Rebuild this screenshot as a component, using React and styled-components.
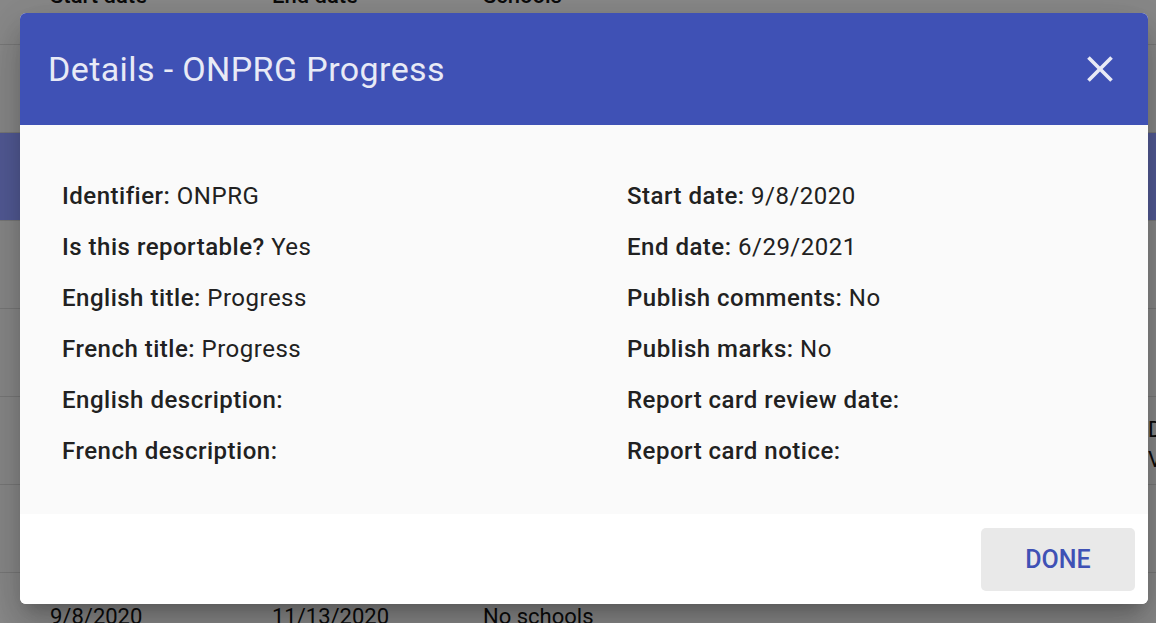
import React from "react";
import styled, { createGlobalStyle } from "styled-components";

const GlobalStyle = createGlobalStyle`
  html, body {
    margin: 0;
    padding: 0;
    height: 100%;
    overflow: hidden;
  }
  body {
    font-family: Roboto, "Liberation Sans", Arial, sans-serif;
    background: #e3e3e3;
  }
`;

const rows = [
  { start: "", end: "", schools: "" },
  { start: "", end: "", schools: "", selected: true },
  { start: "", end: "", schools: "" },
  { start: "", end: "", schools: "" },
  { start: "", end: "", schools: "", extra: ["Details", "View"] },
  { start: "", end: "", schools: "" },
  { start: "9/8/2020", end: "11/13/2020", schools: "No schools" },
];

const leftFields = [
  { label: "Identifier:", value: "ONPRG" },
  { label: "Is this reportable?", value: "Yes" },
  { label: "English title:", value: "Progress" },
  { label: "French title:", value: "Progress" },
  { label: "English description:", value: "" },
  { label: "French description:", value: "" },
];

const rightFields = [
  { label: "Start date:", value: "9/8/2020" },
  { label: "End date:", value: "6/29/2021" },
  { label: "Publish comments:", value: "No" },
  { label: "Publish marks:", value: "No" },
  { label: "Report card review date:", value: "" },
  { label: "Report card notice:", value: "" },
];

const CloseIcon = () => (
  <svg width="44" height="44" viewBox="0 0 24 24" fill="currentColor">
    <path d="M19 6.41L17.59 5 12 10.59 6.41 5 5 6.41 10.59 12 5 17.59 6.41 19 12 13.41 17.59 19 19 17.59 13.41 12z" />
  </svg>
);

const App = () => {
  return (
    <>
      <GlobalStyle />
      <Page>
        <HeaderRow>
          <Cell>Start date</Cell>
          <Cell>End date</Cell>
          <Cell>Schools</Cell>
        </HeaderRow>
        {rows.map((r, i) => (
          <Row key={i} $selected={r.selected}>
            <Cell>{r.start}</Cell>
            <Cell>{r.end}</Cell>
            <Cell>{r.schools}</Cell>
            {r.extra && (
              <ExtraCell>
                {r.extra.map((t) => (
                  <div key={t}>{t}</div>
                ))}
              </ExtraCell>
            )}
          </Row>
        ))}
      </Page>

      <Overlay>
        <Dialog>
          <DialogHeader>
            <DialogTitle>Details - ONPRG Progress</DialogTitle>
            <CloseButton aria-label="close">
              <CloseIcon />
            </CloseButton>
          </DialogHeader>
          <DialogBody>
            <Column>
              {leftFields.map((f) => (
                <Field key={f.label}>
                  <strong>{f.label}</strong> {f.value}
                </Field>
              ))}
            </Column>
            <Column>
              {rightFields.map((f) => (
                <Field key={f.label}>
                  <strong>{f.label}</strong> {f.value}
                </Field>
              ))}
            </Column>
          </DialogBody>
          <DialogFooter>
            <DoneButton>Done</DoneButton>
          </DialogFooter>
        </Dialog>
      </Overlay>
    </>
  );
};

export default App;

const Page = styled.div`
  display: flex;
  flex-direction: column;
  width: 100vw;
  height: 100vh;
  overflow: hidden;
  color: #111;
  font-size: 22px;
`;

const HeaderRow = styled.div`
  display: grid;
  grid-template-columns: 222px 211px 1fr;
  align-items: center;
  flex-shrink: 0;
  height: 98px;
  margin-top: -54px;
  padding-left: 50px;
  border-bottom: 1px solid #c8c8c8;
  font-weight: 500;
`;

const Row = styled.div`
  position: relative;
  display: grid;
  grid-template-columns: 222px 211px 1fr;
  align-items: center;
  flex-shrink: 0;
  height: 87px;
  padding-left: 50px;
  border-bottom: 1px solid #c8c8c8;
  background: ${(p) => (p.$selected ? "#8996fa" : "transparent")};
`;

const Cell = styled.div`
  white-space: nowrap;
`;

const ExtraCell = styled.div`
  position: absolute;
  left: 1148px;
  top: 18px;
  line-height: 30px;
`;

const Overlay = styled.div`
  position: fixed;
  inset: 0;
  display: flex;
  align-items: flex-start;
  padding: 13px 8px 0 20px;
  background: rgba(0, 0, 0, 0.4);
`;

const Dialog = styled.div`
  flex: 1;
  display: flex;
  flex-direction: column;
  border-radius: 6px;
  overflow: hidden;
  background: #fff;
  box-shadow: 0px 11px 15px -7px rgba(0, 0, 0, 0.2),
    0px 24px 38px 3px rgba(0, 0, 0, 0.14), 0px 9px 46px 8px rgba(0, 0, 0, 0.12);
`;

const DialogHeader = styled.div`
  display: flex;
  align-items: center;
  justify-content: space-between;
  height: 112px;
  padding: 0 18px 0 28px;
  background: #3f51b5;
  color: #e8eaf6;
`;

const DialogTitle = styled.h2`
  margin: 0;
  font-size: 34px;
  font-weight: 400;
  letter-spacing: 0.4px;
`;

const CloseButton = styled.button`
  display: flex;
  align-items: center;
  justify-content: center;
  width: 60px;
  height: 60px;
  padding: 0;
  border: none;
  background: transparent;
  color: #e8eaf6;
  cursor: pointer;
`;

const DialogBody = styled.div`
  display: grid;
  grid-template-columns: 565px 1fr;
  padding: 53px 42px 45px 42px;
  background: #fafafa;
`;

const Column = styled.div`
  display: flex;
  flex-direction: column;
  gap: 15px;
`;

const Field = styled.div`
  font-size: 24px;
  line-height: 36px;
  letter-spacing: 0.5px;
  color: #212121;
  strong {
    font-weight: 500;
  }
`;

const DialogFooter = styled.div`
  display: flex;
  justify-content: flex-end;
  align-items: center;
  height: 90px;
  padding: 0 13px;
  background: #fff;
`;

const DoneButton = styled.button`
  width: 154px;
  height: 63px;
  border: none;
  border-radius: 5px;
  background: #e9e9e9;
  color: #3f51b5;
  font-family: Roboto, "Liberation Sans", Arial, sans-serif;
  font-size: 25px;
  font-weight: 500;
  text-transform: uppercase;
  letter-spacing: 0;
  cursor: pointer;
`;
